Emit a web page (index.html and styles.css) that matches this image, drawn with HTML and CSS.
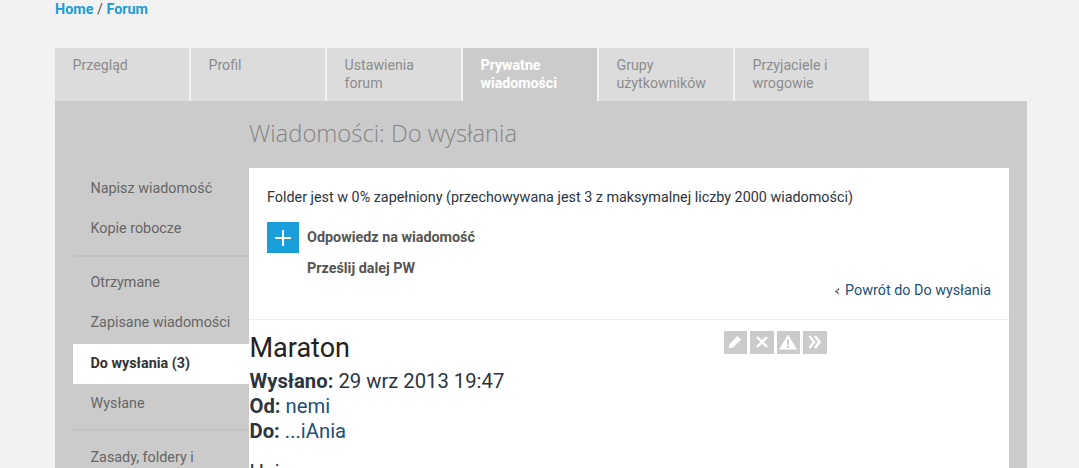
FILE: index.html
```html
<!DOCTYPE html>
<html lang="pl">
<head>
<meta charset="utf-8">
<title>Wiadomości: Do wysłania</title>
<link rel="stylesheet" href="styles.css">
</head>
<body>
<div class="page">
  <nav class="crumbs"><a href="#">Home</a> / <a href="#">Forum</a></nav>
  <ul class="tabs">
    <li class="tab">Przegląd</li>
    <li class="tab">Profil</li>
    <li class="tab">Ustawienia forum</li>
    <li class="tab active">Prywatne wiadomości</li>
    <li class="tab">Grupy użytkowników</li>
    <li class="tab">Przyjaciele i wrogowie</li>
  </ul>
  <div class="panel">
    <aside class="side">
      <ul class="group">
        <li>Napisz wiadomość</li>
        <li>Kopie robocze</li>
      </ul>
      <ul class="group">
        <li>Otrzymane</li>
        <li>Zapisane wiadomości</li>
        <li class="current">Do wysłania (3)</li>
        <li>Wysłane</li>
      </ul>
      <ul class="group">
        <li>Zasady, foldery i</li>
      </ul>
    </aside>
    <main class="main">
      <h1 class="title">Wiadomości: Do wysłania</h1>
      <div class="card">
        <section class="top">
          <p class="status">Folder jest w 0% zapełniony (przechowywana jest 3 z maksymalnej liczby 2000 wiadomości)</p>
          <div class="action">
            <span class="plus"><svg width="20" height="20" viewBox="0 0 20 20"><path d="M10 2v16M2 10h16" stroke="#fff" stroke-width="2"/></svg></span>
            <span>Odpowiedz na wiadomość</span>
          </div>
          <div class="action second"><span>Prześlij dalej PW</span></div>
          <div class="back">
            <svg class="back-icon" width="5" height="7" viewBox="0 0 5 7"><path d="M4 .8 1 3.500 4 6.200" fill="none" stroke="#444" stroke-width="1.500" stroke-dasharray="1.700 .8"/></svg>
            <a href="#">Powrót do Do wysłania</a>
          </div>
        </section>
        <section class="message">
          <div class="tools">
            <span class="tool"><svg width="18" height="18" viewBox="0 0 18 18"><path d="M2.500 15.500l1-4.500 8-8 3.500 3.500-8 8z" fill="#fff"/></svg></span>
            <span class="tool"><svg width="18" height="18" viewBox="0 0 18 18"><path d="M4 4l10 10M14 4 4 14" stroke="#fff" stroke-width="2.400"/></svg></span>
            <span class="tool"><svg width="20" height="18" viewBox="0 0 20 18"><path fill-rule="evenodd" d="M10 1.500l9 15H1zM9 6.500v5.500h2V6.500zM9 13v2h2v-2z" fill="#fff"/></svg></span>
            <span class="tool"><svg width="18" height="18" viewBox="0 0 18 18"><path d="M3.500 3l4.500 6-4.500 6M9 3l4.500 6L9 15" fill="none" stroke="#fff" stroke-width="2.400"/></svg></span>
          </div>
          <h2 class="subject">Maraton</h2>
          <p class="meta"><b>Wysłano:</b> 29 wrz 2013 19:47</p>
          <p class="meta"><b>Od:</b> <a href="#">nemi</a></p>
          <p class="meta"><b>Do:</b> <a href="#">...iAnia</a></p>
          <p class="body-text">Hej</p>
        </section>
      </div>
    </main>
  </div>
</div>
</body>
</html>
```
FILE: styles.css
```css
* { box-sizing: border-box; }
html, body { margin: 0; height: 468px; overflow: hidden; }
body { background: #f2f2f2; font-family: Roboto, "Liberation Sans", sans-serif; font-size: 14.350px; color: #2c3440; }
ul { list-style: none; margin: 0; padding: 0; }
p, h1, h2 { margin: 0; }
a { text-decoration: none; color: #1d5077; }

.page { width: 972px; margin-left: 55px; }

.crumbs { height: 48px; line-height: 18px; padding-top: 1px; color: #555; }
.crumbs a { color: #1d9dd4; font-weight: 700; }

.tabs { display: flex; gap: 2px; height: 53px; }
.tab { width: 134px; padding: 8px 17.500px 0; font-size: 14.200px; line-height: 18px; background: #dcdcdc; color: #8c8c8c; }
.tab.active { background: #cbcbcb; color: #fff; font-weight: 700; }

.panel { display: flex; background: #cbcbcb; padding: 0 18px; height: 600px; }

.side { width: 176px; padding-top: 68px; flex: none; }
.group { padding-bottom: 5px; margin-bottom: 6.400px; border-bottom: 2px solid #c2c2c2; }
.group:last-child { border-bottom: 0; }
.group li { height: 40.300px; padding-left: 17.500px; line-height: 40px; color: #666; }
.group li.current { height: 40.500px; background: #fff; color: #333; font-weight: 700; }

.main { flex: 1; min-width: 0; }
.title { height: 67px; padding-top: 15px; font: 300 23.800px/34px "Open Sans", sans-serif; color: #858585; }
.card { background: #fff; height: 500px; }

.top { height: 152px; padding: 21px 18px 0; border-bottom: 1px solid #eee; }
.status { line-height: 18px; }
.action { display: flex; align-items: center; gap: 8px; height: 31px; margin-top: 15px; font-weight: 700; color: #555; }
.action.second { margin-top: 0; padding-left: 40px; height: 31px; }
.plus { display: flex; align-items: center; justify-content: center; width: 32px; height: 31px; background: #1a9fdb; }
.back { display: flex; align-items: center; justify-content: flex-end; gap: 5px; height: 18px; margin-top: -3px; }
.back-icon { margin-top: 3px; }

.message { position: relative; padding-top: 11px; padding-left: 0.500px; font-size: 20.250px; line-height: 25px; color: #2c3440; }
.tools { position: absolute; left: 474.500px; top: 10.500px; display: flex; gap: 3px; }
.tool { display: flex; align-items: center; justify-content: center; width: 23.500px; height: 23.500px; background: #cbcbcb; }
.subject { font-size: 27px; font-weight: 400; line-height: 34px; margin-bottom: 4px; color: #222; }
.meta b { font-weight: 700; }
.body-text { margin-top: 16px; }
```
